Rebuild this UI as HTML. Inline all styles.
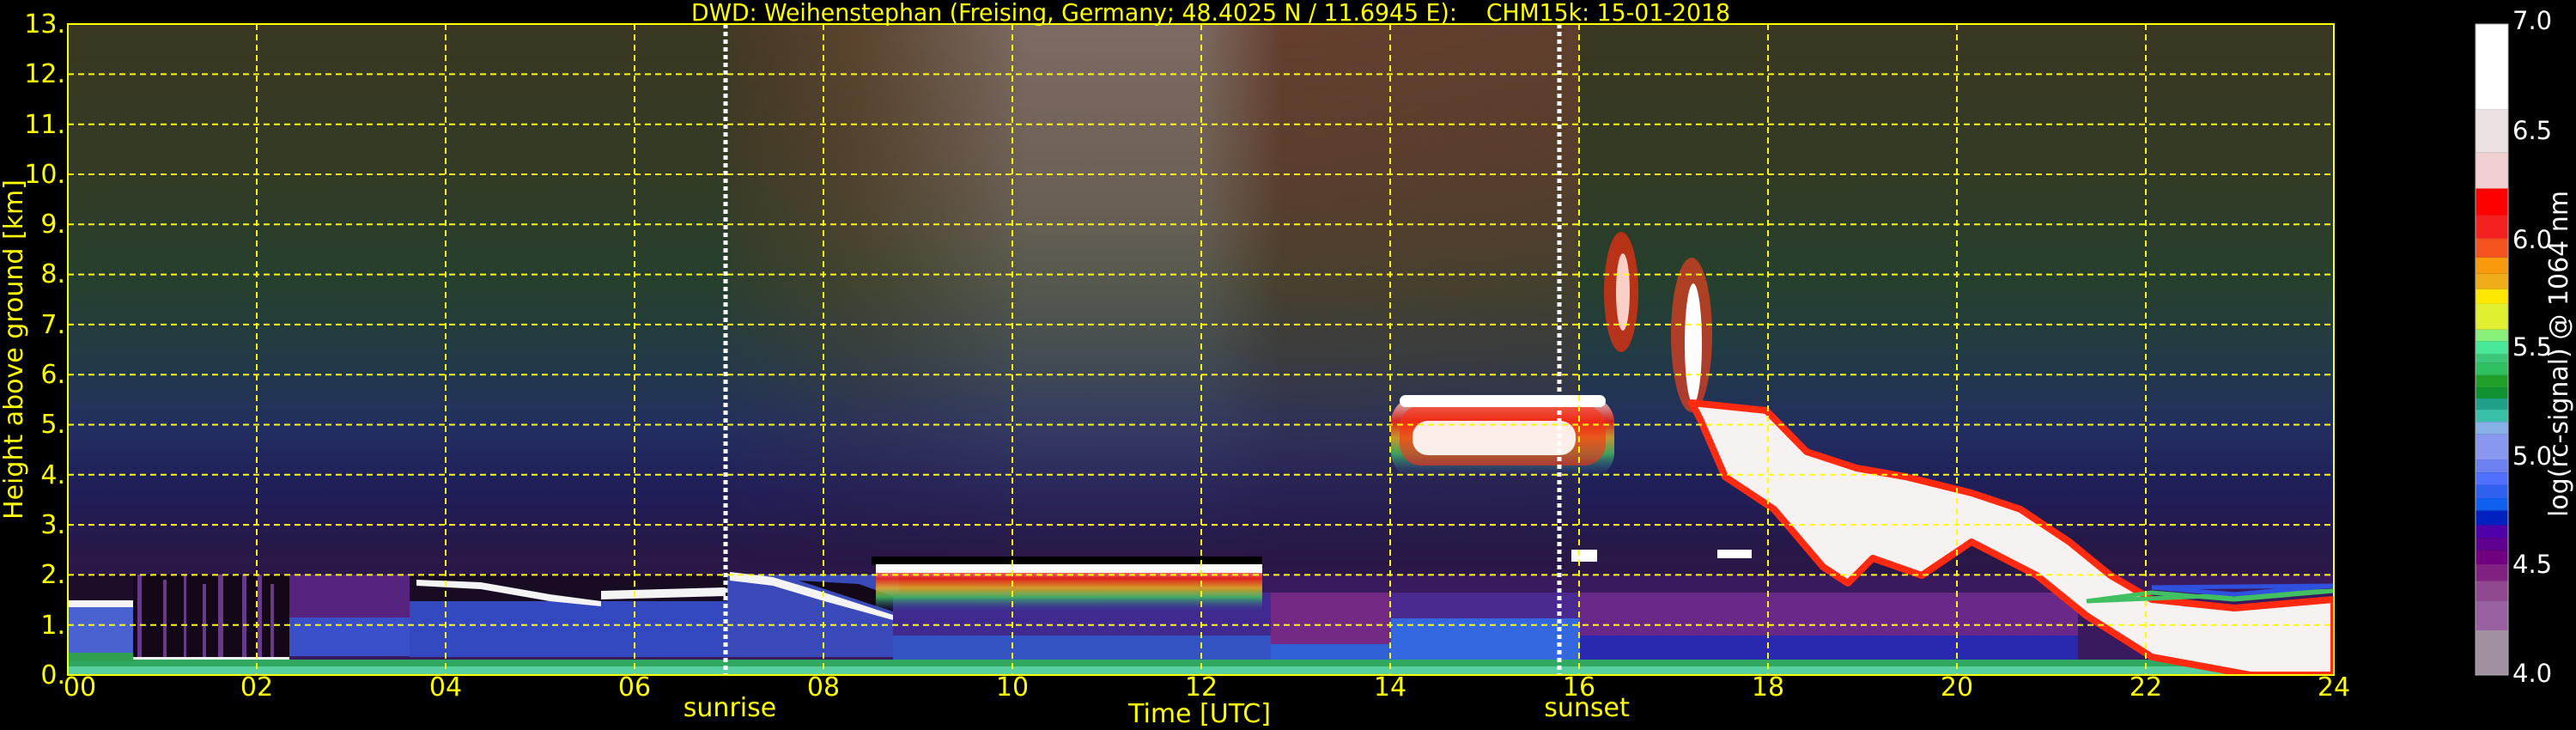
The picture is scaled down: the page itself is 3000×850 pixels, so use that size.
<!DOCTYPE html>
<html><head><meta charset="utf-8"><style>
html,body{margin:0;padding:0;background:#000;}
body{width:3000px;height:850px;overflow:hidden;position:relative;}
svg{position:absolute;left:0;top:0;}
</style></head><body>
<svg width="3000" height="850" viewBox="0 0 3000 850" xmlns="http://www.w3.org/2000/svg" font-family="DejaVu Sans, Liberation Sans, sans-serif">
<defs>
<clipPath id="pc"><rect x="79" y="28" width="2639" height="758"/></clipPath>
<linearGradient id="sky" gradientUnits="userSpaceOnUse" x1="0" y1="28" x2="0" y2="786">
<stop offset="0" stop-color="#3a3822"/>
<stop offset="0.2" stop-color="#343a24"/>
<stop offset="0.4" stop-color="#26402e"/>
<stop offset="0.52" stop-color="#223a48"/>
<stop offset="0.62" stop-color="#222e60"/>
<stop offset="0.72" stop-color="#201e58"/>
<stop offset="0.8" stop-color="#261848"/>
<stop offset="0.85" stop-color="#2c1748"/>
<stop offset="1" stop-color="#2c1748"/>
</linearGradient>
<linearGradient id="dayH" gradientUnits="userSpaceOnUse" x1="849" y1="0" x2="1839" y2="0">
<stop offset="0" stop-color="#6a4030" stop-opacity="0.2"/>
<stop offset="0.15" stop-color="#6a4a34" stop-opacity="0.7"/>
<stop offset="0.35" stop-color="#8a7470" stop-opacity="0.85"/>
<stop offset="0.55" stop-color="#8a7470" stop-opacity="0.85"/>
<stop offset="0.65" stop-color="#6a4030" stop-opacity="0.9"/>
<stop offset="1" stop-color="#6a4030" stop-opacity="0.8"/>
</linearGradient>
<linearGradient id="dayV" gradientUnits="userSpaceOnUse" x1="0" y1="28" x2="0" y2="660">
<stop offset="0" stop-color="#fff" stop-opacity="1"/>
<stop offset="0.35" stop-color="#fff" stop-opacity="0.75"/>
<stop offset="0.7" stop-color="#fff" stop-opacity="0.25"/>
<stop offset="1" stop-color="#fff" stop-opacity="0"/>
</linearGradient>
<mask id="dm"><rect x="849" y="28" width="990" height="640" fill="url(#dayV)"/></mask>
<linearGradient id="cl" x1="0" y1="0" x2="0" y2="1">
<stop offset="0" stop-color="#ffffff"/>
<stop offset="0.3" stop-color="#ff2010"/>
<stop offset="0.5" stop-color="#f0b020"/>
<stop offset="0.7" stop-color="#40c060"/>
<stop offset="1" stop-color="#3040a0" stop-opacity="0"/>
</linearGradient>
</defs>
<g clip-path="url(#pc)">
<rect x="79" y="28" width="2639" height="758" fill="url(#sky)"/>
<rect x="849" y="28" width="990" height="640" fill="url(#dayH)" mask="url(#dm)"/>
<!-- boundary layer -->
<rect x="79" y="669" width="2639" height="117" fill="#3a1a5e"/>
<rect x="79" y="669" width="76" height="30" fill="#1c0c28"/>
<rect x="79" y="699" width="76" height="8" fill="#f4f4f4"/>
<rect x="79" y="707" width="76" height="55" fill="#4a62d0"/>
<rect x="155" y="669" width="182" height="97" fill="#140818"/>
<g fill="#6a3a8a"><rect x="160" y="669" width="5" height="97"/><rect x="190" y="675" width="4" height="90"/><rect x="214" y="669" width="3" height="97"/><rect x="236" y="680" width="4" height="86"/><rect x="254" y="669" width="6" height="97"/><rect x="282" y="669" width="5" height="97"/><rect x="300" y="669" width="5" height="97"/><rect x="315" y="680" width="4" height="86"/></g>
<rect x="155" y="765" width="182" height="7" fill="#f4f4f4"/>
<rect x="337" y="669" width="140" height="50" fill="#56247e"/>
<rect x="337" y="719" width="140" height="45" fill="#3a50c8"/>
<rect x="477" y="700" width="370" height="65" fill="#3448c0"/>
<rect x="477" y="669" width="370" height="31" fill="#180c22"/>
<polygon points="485,675 560,678 640,692 700,700 700,706 640,700 560,686 485,682" fill="#f4f4f4"/>
<polygon points="700,688 845,684 845,694 700,698" fill="#f4f4f4"/>
<rect x="847" y="669" width="200" height="96" fill="#3a4ab8"/>
<polygon points="850,666 900,672 960,690 1040,716 1040,722 960,700 900,682 850,676" fill="#f4f4f4"/>
<polygon points="930,676 1040,712 1040,694 1000,680" fill="#120818"/>
<rect x="1040" y="690" width="440" height="50" fill="#402a90"/>
<rect x="1040" y="740" width="440" height="30" fill="#3454c4"/>
<rect x="1015" y="648" width="455" height="10" fill="#000"/>
<rect x="1020" y="657" width="450" height="55" fill="url(#cl)" opacity="0.85"/>
<rect x="1020" y="657" width="450" height="10" fill="#fafafa"/>
<rect x="1480" y="690" width="140" height="60" fill="#742a84"/>
<rect x="1480" y="750" width="140" height="22" fill="#3060d8"/>
<rect x="1620" y="690" width="220" height="30" fill="#4a2a90"/>
<rect x="1620" y="720" width="220" height="52" fill="#3468e0"/>
<rect x="1840" y="690" width="580" height="70" fill="#6a2888"/>
<rect x="1840" y="740" width="580" height="32" fill="#2828b0"/>
<!-- ground green -->
<rect x="79" y="768" width="2639" height="18" fill="#30a860"/>
<rect x="79" y="776" width="2639" height="10" fill="#58d0a0"/>
<rect x="79" y="760" width="76" height="10" fill="#30a050"/>
<!-- mid clouds 14-16h -->
<rect x="1620" y="462" width="260" height="95" rx="30" fill="url(#cl)" opacity="0.8"/>
<rect x="1630" y="472" width="240" height="70" rx="25" fill="#ff3010" opacity="0.6"/>
<rect x="1645" y="490" width="190" height="40" rx="18" fill="#ffffff" opacity="0.9"/>
<rect x="1630" y="460" width="240" height="14" rx="7" fill="#ffffff"/>
<!-- cirrus -->
<ellipse cx="1888" cy="340" rx="20" ry="70" fill="#e83010" opacity="0.75"/>
<ellipse cx="1890" cy="340" rx="8" ry="45" fill="#f8d0c8"/>
<ellipse cx="1970" cy="390" rx="24" ry="90" fill="#e84020" opacity="0.7"/>
<ellipse cx="1972" cy="400" rx="10" ry="70" fill="#ffffff"/>
<!-- descending main mass -->
<polygon points="1970,469 2057,478 2104,526 2162,545 2219,555 2296,574 2353,593 2410,631 2458,670 2506,698 2602,708 2718,698 2718,786 2621,786 2506,765 2430,717 2372,670 2296,631 2238,670 2181,650 2152,679 2123,660 2066,593 2009,555 1980,488" fill="#f6f2f2" stroke="#ff2a10" stroke-width="8" stroke-linejoin="round"/>
<polygon points="2430,700 2506,690 2602,698 2718,688" fill="none" stroke="#40c060" stroke-width="5"/>
<polygon points="2506,684 2602,692 2718,682" fill="none" stroke="#3050e0" stroke-width="5"/>
<!-- small clouds -->
<rect x="2000" y="640" width="40" height="10" fill="#fff"/>
<rect x="1830" y="640" width="30" height="14" fill="#fff"/>
</g>
<!-- grid -->
<g stroke="#ffff00" stroke-width="2" stroke-dasharray="7,5" fill="none">
<path d="M79 727.7H2718M79 669.4H2718M79 611.1H2718M79 552.8H2718M79 494.5H2718M79 436.2H2718M79 377.9H2718M79 319.6H2718M79 261.3H2718M79 203H2718M79 144.7H2718M79 86.4H2718"/>
<path d="M299 28V786M519 28V786M739 28V786M959 28V786M1179 28V786M1399 28V786M1619 28V786M1839 28V786M2059 28V786M2279 28V786M2499 28V786"/>
</g>
<g stroke="#ffffff" stroke-width="5" stroke-dasharray="5,4"><path d="M845 28V786M1816 28V786"/></g>
<rect x="79" y="28" width="2639" height="758" fill="none" stroke="#ffff00" stroke-width="2"/>
<!-- y labels -->
<g fill="#ffff00" font-size="30" text-anchor="end">
<text x="76" y="796">0.</text><text x="76" y="738">1.</text><text x="76" y="679">2.</text><text x="76" y="621">3.</text><text x="76" y="563">4.</text><text x="76" y="504">5.</text><text x="76" y="446">6.</text><text x="76" y="388">7.</text><text x="76" y="329">8.</text><text x="76" y="271">9.</text><text x="76" y="213">10.</text><text x="76" y="155">11.</text><text x="76" y="96">12.</text><text x="76" y="38">13.</text>
</g>
<g fill="#ffff00" font-size="30" text-anchor="middle">
<text x="93" y="810">00</text><text x="299" y="810">02</text><text x="519" y="810">04</text><text x="739" y="810">06</text><text x="959" y="810">08</text><text x="1179" y="810">10</text><text x="1399" y="810">12</text><text x="1619" y="810">14</text><text x="1839" y="810">16</text><text x="2059" y="810">18</text><text x="2279" y="810">20</text><text x="2499" y="810">22</text><text x="2718" y="810">24</text>
<text x="850" y="834">sunrise</text>
<text x="1397" y="841">Time [UTC]</text>
<text x="1848" y="834">sunset</text>
</g>
<text x="805" y="24" fill="#ffff00" font-size="28" textLength="1210" lengthAdjust="spacingAndGlyphs" xml:space="preserve">DWD: Weihenstephan (Freising, Germany; 48.4025 N / 11.6945 E):    CHM15k: 15-01-2018</text>
<text transform="translate(26,407) rotate(-90)" fill="#ffff00" font-size="30" text-anchor="middle">Height above ground [km]</text>
<!-- colorbar -->
<svg x="2883" y="0" width="38" height="850" viewBox="0 0 38 1568" preserveAspectRatio="none">
<rect x="0" y="52" width="38" height="183" fill="#ffffff"/>
<rect x="0" y="235" width="38" height="93" fill="#ebe3e3"/>
<rect x="0" y="328" width="38" height="77" fill="#f0d0d0"/>
<rect x="0" y="405" width="38" height="57" fill="#ff0000"/>
<rect x="0" y="462" width="38" height="50" fill="#f52020"/>
<rect x="0" y="512" width="38" height="41" fill="#f5521f"/>
<rect x="0" y="553" width="38" height="35" fill="#f99a0c"/>
<rect x="0" y="588" width="38" height="33" fill="#f0ac18"/>
<rect x="0" y="621" width="38" height="31" fill="#ffe800"/>
<rect x="0" y="652" width="38" height="56" fill="#e0f030"/>
<rect x="0" y="708" width="38" height="25" fill="#88f078"/>
<rect x="0" y="733" width="38" height="27" fill="#48e898"/>
<rect x="0" y="760" width="38" height="20" fill="#3cc878"/>
<rect x="0" y="780" width="38" height="26" fill="#30c060"/>
<rect x="0" y="806" width="38" height="26" fill="#20a028"/>
<rect x="0" y="832" width="38" height="24" fill="#109030"/>
<rect x="0" y="856" width="38" height="24" fill="#20a088"/>
<rect x="0" y="880" width="38" height="26" fill="#38c0a8"/>
<rect x="0" y="906" width="38" height="27" fill="#88b0e8"/>
<rect x="0" y="933" width="38" height="54" fill="#8898f0"/>
<rect x="0" y="987" width="38" height="28" fill="#6c80f0"/>
<rect x="0" y="1015" width="38" height="27" fill="#5070ff"/>
<rect x="0" y="1042" width="38" height="28" fill="#3060f0"/>
<rect x="0" y="1070" width="38" height="27" fill="#1060f0"/>
<rect x="0" y="1097" width="38" height="31" fill="#0020c0"/>
<rect x="0" y="1128" width="38" height="27" fill="#5000a8"/>
<rect x="0" y="1155" width="38" height="27" fill="#600090"/>
<rect x="0" y="1182" width="38" height="30" fill="#700080"/>
<rect x="0" y="1212" width="38" height="36" fill="#802080"/>
<rect x="0" y="1248" width="38" height="42" fill="#904890"/>
<rect x="0" y="1290" width="38" height="64" fill="#9860a0"/>
<rect x="0" y="1354" width="38" height="96" fill="#a090a0"/>
</svg>
<rect x="2883" y="28" width="38" height="758" fill="none" stroke="#b0b0b0" stroke-width="1"/>
<g fill="#ffffff" font-size="29">
<text x="2926" y="34">7.0</text><text x="2926" y="162">6.5</text><text x="2926" y="289">6.0</text><text x="2926" y="414">5.5</text><text x="2926" y="541">5.0</text><text x="2926" y="667">4.5</text><text x="2926" y="794">4.0</text>
</g>
<text transform="translate(2990,412) rotate(-90)" fill="#ffffff" font-size="30" text-anchor="middle">log(rc-signal) @ 1064 nm</text>
</svg>
</body></html>
